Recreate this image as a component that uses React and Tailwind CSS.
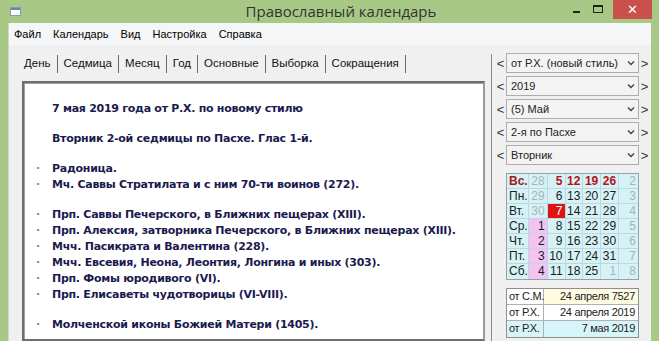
import React from "react";

const lines = [
    { t: "7 мая 2019 года от Р.Х. по новому стилю" },
    { gap: true },
    { t: "Вторник 2-ой седмицы по Пасхе. Глас 1-й." },
    { gap: true },
    { t: "Радоница.", b: true },
    { t: "Мч. Саввы Стратилата и с ним 70-ти воинов (272).", b: true },
    { gap: true },
    { t: "Прп. Саввы Печерского, в Ближних пещерах (XIII).", b: true },
    { t: "Прп. Алексия, затворника Печерского, в Ближних пещерах (XIII).", b: true },
    { t: "Мчч. Пасикрата и Валентина (228).", b: true },
    { t: "Мчч. Евсевия, Неона, Леонтия, Лонгина и иных (303).", b: true },
    { t: "Прп. Фомы юродивого (VI).", b: true },
    { t: "Прп. Елисаветы чудотворицы (VI-VIII).", b: true },
    { gap: true },
    { t: "Молченской иконы Божией Матери (1405).", b: true },
];

const tabs = ["День", "Седмица", "Месяц", "Год", "Основные", "Выборка", "Сокращения"];

const selects = ["от Р.Х. (новый стиль)", "2019", "(5) Май", "2-я по Пасхе", "Вторник"];

// calendar rows: label, then 6 cells [value, kind]
const cal = [
    ["Вс.", [["28", "g"], ["5", "s"], ["12", "s"], ["19", "s"], ["26", "s"], ["2", "g"]]],
    ["Пн.", [["29", "g"], ["6"], ["13"], ["20"], ["27"], ["3", "g"]]],
    ["Вт.", [["30", "g"], ["7", "t"], ["14"], ["21"], ["28"], ["4", "g"]]],
    ["Ср.", [["1", "p"], ["8"], ["15"], ["22"], ["29"], ["5", "g"]]],
    ["Чт.", [["2", "p"], ["9"], ["16"], ["23"], ["30"], ["6", "g"]]],
    ["Пт.", [["3", "p"], ["10"], ["17"], ["24"], ["31"], ["7", "g"]]],
    ["Сб.", [["4", "p"], ["11"], ["18"], ["25"], ["1", "g"], ["8", "g"]]],
];

const colW = ["w-[19px]", "w-[18px]", "w-[18px]", "w-[18px]", "w-[18px]", "w-[19px]"];

const Chevron = () => (
    <svg width="8" height="6" viewBox="0 0 8 6" className="mr-[3px]">
        <path d="M1 1.5 L4 4.5 L7 1.5" fill="none" stroke="#444" strokeWidth="1.4" />
    </svg>
);

export default function App() {
    return (
        <div className="w-[659px] h-[341px] overflow-hidden bg-[#a8c985] flex flex-col">
            {/* Title bar */}
            <div className="h-[23px] flex items-center relative shrink-0">
                <div className="ml-[10px] w-[11px] h-[9px] bg-white border border-[#8a9aa8] flex items-start">
                    <div className="w-full h-[2px] bg-[#5f88b8]" />
                </div>
                <div className="flex-1 text-center text-[15px] text-[#333] -mt-[1px] pl-[96px]" style={{ fontFamily: '"Open Sans", "Noto Sans", sans-serif' }}>
                    Православный календарь
                </div>
                <div className="flex items-start self-stretch">
                    <div className="w-[22px] flex justify-center pt-[11px]">
                        <div className="w-[7px] h-[2px] bg-[#222]" />
                    </div>
                    <div className="w-[22px] flex justify-center pt-[5px]">
                        <div className="w-[10px] h-[8px] border border-[#222] border-t-2" />
                    </div>
                    <div className="w-[39px] h-[19px] ml-[4px] bg-[#c9504c] flex items-center justify-center text-white text-[13px] font-bold" style={{ fontFamily: '"DejaVu Sans", sans-serif' }}>
                        ✕
                    </div>
                    <div className="w-[7px]" />
                </div>
            </div>

            {/* Client area */}
            <div className="flex-1 mx-[8px] bg-[#f0f0f0] border-l border-[#d4d4d4] flex flex-col" style={{ fontFamily: '"Liberation Sans", Arial, sans-serif' }}>
                {/* Menu */}
                <div className="h-[22px] bg-[#f5f6f7] flex items-center gap-[12px] pl-[5px] text-[11px] text-black shrink-0">
                    <span>Файл</span>
                    <span>Календарь</span>
                    <span>Вид</span>
                    <span>Настройка</span>
                    <span>Справка</span>
                </div>

                <div className="flex flex-1">
                    {/* Left part */}
                    <div className="w-[483px] flex flex-col">
                        <div className="mt-[9px] h-[20px] flex items-center pl-[9px] text-[11.5px] text-[#111]">
                            {tabs.map((t) => (
                                <div key={t} className="flex items-center h-full">
                                    <span className="pl-[6px] pr-[6px]">{t}</span>
                                    <div className="w-[1px] h-[18px] bg-[#6a6a6a]" />
                                </div>
                            ))}
                        </div>

                        <div className="mt-[7px] ml-[13px] w-[463px] flex-1 bg-white border-2 border-[#6e6e6e] border-r-[#9a9a9a] shadow-[inset_1px_1px_0_#a0a0a0] pt-[18px]">
                            <div className="text-[11px] font-bold text-[#1b1b4f] leading-[16px] tracking-[-0.27px]" style={{ fontFamily: '"DejaVu Sans", Verdana, sans-serif' }}>
                                {lines.map((l, i) =>
                                    l.gap ? (
                                        <div key={i} className="h-[14px]" />
                                    ) : (
                                        <div key={i} className="flex whitespace-nowrap">
                                            <span className="w-[28px] pl-[12px] text-[#888]">{l.b ? "·" : ""}</span>
                                            <span>{l.t}</span>
                                        </div>
                                    )
                                )}
                            </div>
                        </div>
                    </div>

                    {/* Right panel */}
                    <div className="flex-1 flex flex-col mt-[9px] border-l border-[#8c8c8c] pl-[3px] pr-[1px] text-[11px] text-[#222]">
                        <div className="flex flex-col gap-[3px] mt-[-1px]">
                            {selects.map((s) => (
                                <div key={s} className="flex items-center h-[20px]">
                                    <span className="w-[11px] text-[13px] text-[#333] text-center leading-none">&lt;</span>
                                    <div className="w-[133px] h-[20px] bg-[#f3f3f3] border border-[#adadad] flex items-center justify-between pl-[4px]">
                                        <span>{s}</span>
                                        <Chevron />
                                    </div>
                                    <span className="w-[11px] text-[13px] text-[#333] text-center leading-none">&gt;</span>
                                </div>
                            ))}
                        </div>

                        {/* Calendar */}
                        <div className="ml-[11px] mt-[8px] w-[133px] border border-[#8fa3a8] bg-[#d6f2f6] text-[12px]">
                            {cal.map(([lab, cells], ri) => (
                                <div key={lab} className={`flex h-[15px] ${ri < 6 ? "border-b border-[#bcd9de]" : ""}`}>
                                    <div className={`w-[22px] pl-[2px] leading-[14px] border-r border-[#bcd9de] ${ri === 0 ? "font-bold text-[#a01a1a]" : "text-[#222]"}`}>
                                        {lab}
                                    </div>
                                    {cells.map(([v, k], ci) => {
                                        let cls = "text-[#1a1a1a]";
                                        if (k === "g") cls = "text-[#a3b4b6]";
                                        if (k === "s") cls = "font-bold text-[#b3121a]";
                                        if (k === "p") cls = "bg-[#f3c4f3] text-[#1a1a1a]";
                                        if (k === "t") cls = "bg-[#e01414] text-white";
                                        return (
                                            <div key={ci} className={`${colW[ci]} ${ci < 5 ? "border-r border-[#bcd9de]" : ""} text-right pr-[2px] leading-[14px] ${cls}`}>
                                                {v}
                                            </div>
                                        );
                                    })}
                                </div>
                            ))}
                        </div>

                        {/* Date table */}
                        <div className="ml-[11px] mt-[8px] w-[133px] border border-[#8e8e8e] text-[11px] text-[#222] whitespace-nowrap tracking-[-0.3px]">
                            <div className="flex h-[16px] border-b border-[#b0b0b0]">
                                <div className="w-[37px] pl-[2px] leading-[15px] border-r border-[#b0b0b0] bg-white">от С.М.</div>
                                <div className="flex-1 text-right pr-[3px] leading-[15px] bg-[#fffbe2]">24 апреля 7527</div>
                            </div>
                            <div className="flex h-[16px] border-b border-[#b0b0b0] bg-white">
                                <div className="w-[37px] pl-[2px] leading-[15px] border-r border-[#b0b0b0]">от Р.Х.</div>
                                <div className="flex-1 text-right pr-[3px] leading-[15px]">24 апреля 2019</div>
                            </div>
                            <div className="flex h-[16px] bg-[#d7f4f8]">
                                <div className="w-[37px] pl-[2px] leading-[15px] border-r border-[#b0b0b0]">от Р.Х.</div>
                                <div className="flex-1 text-right pr-[3px] leading-[15px]">7 мая 2019</div>
                            </div>
                        </div>
                    </div>
                </div>
            </div>
        </div>
    );
}
